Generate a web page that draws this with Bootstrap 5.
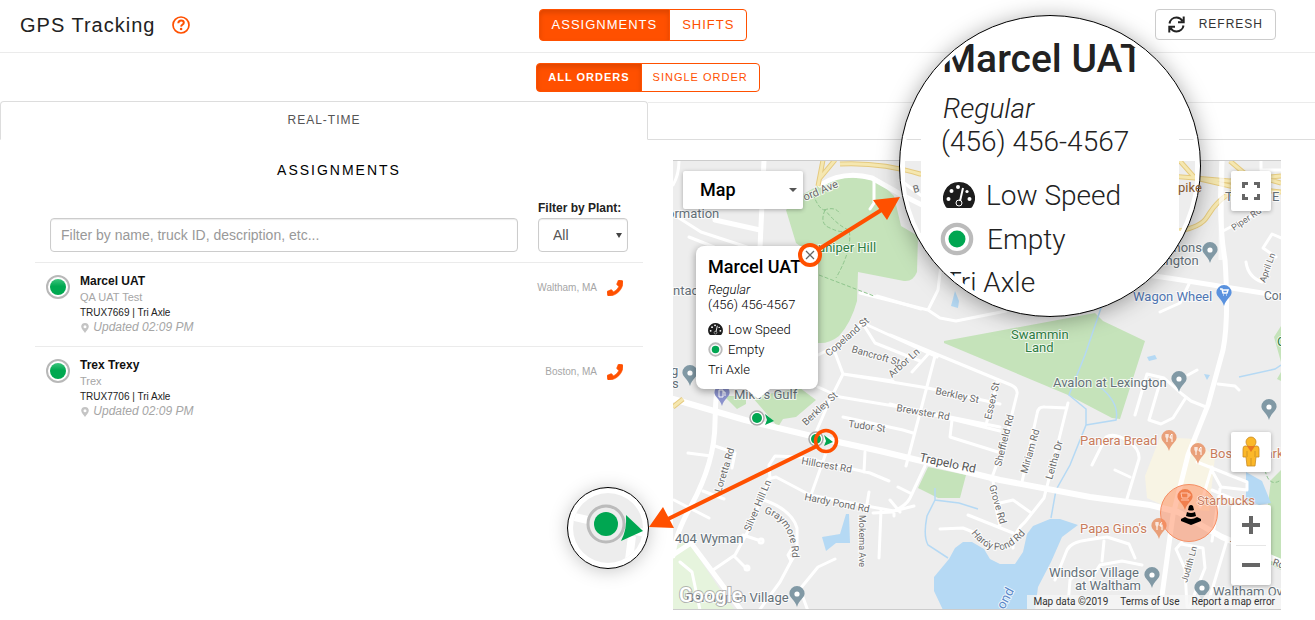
<!DOCTYPE html>
<html lang="en">
<head>
<meta charset="utf-8">
<meta name="viewport" content="width=device-width, initial-scale=1">
<title>GPS Tracking</title>
<link rel="stylesheet" href="https://cdn.jsdelivr.net/npm/bootstrap@5.3.0/dist/css/bootstrap.min.css">
<style>
:root{--brand:#ff5000;--line:#ebebeb;--tabline:#ddd;--muted:#a6a6a6}
body{font-family:"Liberation Sans",Arial,sans-serif;font-size:12px;line-height:15px;color:#222;background:#fff;overflow-x:hidden}
.topbar{display:grid;grid-template-columns:1fr auto 1fr;align-items:center;height:53px;padding:0 39px 3px 10px;border-bottom:1px solid var(--line)}
.topbar h1{font-size:20px;line-height:24px;letter-spacing:1px}
.titlebox{padding-left:10px;gap:17px}
.subbar{height:48px;padding-right:19px}
.btn-brand{--bs-btn-color:var(--brand);--bs-btn-border-color:var(--brand);--bs-btn-border-radius:4px;--bs-btn-active-bg:var(--brand);--bs-btn-active-border-color:var(--brand);--bs-btn-active-color:#fff;--bs-btn-hover-color:#fff;--bs-btn-hover-bg:var(--brand);--bs-btn-hover-border-color:var(--brand);--bs-btn-padding-x:11px;--bs-btn-padding-y:5px;letter-spacing:1px}
.btn-brand.active{box-shadow:inset 0 3px 5px rgba(0,0,0,.13)}
.group-lg .btn{font-size:13px;line-height:20px;padding-left:12px;padding-right:12px}
.group-sm .btn{font-size:11px;line-height:17px}
.btn-refresh{--bs-btn-border-color:#ccc;--bs-btn-border-radius:4px;--bs-btn-padding-x:12px;--bs-btn-padding-y:5px;font-size:12px;line-height:19px;letter-spacing:1px;color:#333;gap:14px}
.split{display:grid;grid-template-columns:1fr 1fr;padding-right:19px}
.tabrow{border-bottom:1px solid var(--tabline)}
.tabrow .nav-link{width:100%;height:39px;margin-bottom:-1px;border:1px solid var(--tabline);border-bottom-color:#fff;border-radius:4px 4px 0 0;background:#fff;color:#555;letter-spacing:1px;padding:0;font-size:12px}
.tabrow .blank-tab{border-top:1px solid var(--line);margin:1px -19px 0 0}
.listpane{padding:22px 5px 0 35px}
.listpane h2{font-size:14px;line-height:17px;letter-spacing:2px;color:#000}
.filters{padding:22px 15px 0;margin-bottom:10px;gap:20px}
.filters .form-control,.filters .form-select{height:34px;border-color:#ccc;border-radius:4px;font-size:14px;line-height:20px;color:#555;padding:6px 10px;box-shadow:inset 0 1px 1px rgba(0,0,0,.08)}
.filters .form-control::placeholder{color:#999}
.filters label{margin-bottom:2px}
.plantbox{flex:0 0 90px}
.filters .form-select{padding:6px 14px;background-image:url("data:image/svg+xml,%3Csvg xmlns='http://www.w3.org/2000/svg' viewBox='0 0 6 5'%3E%3Cpath d='M0 0h6L3 5z' fill='%23444'/%3E%3C/svg%3E");background-size:6px 5px;background-position:right 5px center}
.driver{border-top:1px solid var(--line);height:84px;padding:11px 20px 0 11px;gap:10px}
.driver .dot{width:24px;height:24px;margin-top:1px}
.driver .phone{width:16px;height:16px}
.driver b{color:#111}
.driver .company{margin-top:1px}
.grey{color:var(--muted)}
.sm11{font-size:11px}.sm10{font-size:10px}
.place{margin-top:6px;gap:10px}
.mapcol{padding:20px 15px 10px 25px}
.mapbox{position:relative;border-top:1px solid #ccc;border-bottom:1px solid #ccc}
.mapbox>svg{display:block;width:100%}
.mapart text,.callouts text{font-family:Roboto,sans-serif}
.overlay{position:absolute}
.maptype{left:10px;top:10px;width:120px;height:38px;border:0;background:#fff;box-shadow:0 1px 4px rgba(0,0,0,.3);border-radius:2px;font:500 18px/38px Roboto,sans-serif;color:#000;padding:0 6px 0 17px}
.mapctl{right:10px;width:40px;background:#fff;border-radius:2px;box-shadow:0 1px 4px rgba(0,0,0,.3)}
.mapctl button{border:0;background:none;width:40px;height:40px;padding:0;display:flex;align-items:center;justify-content:center}
.full{top:10px}.pegman{bottom:137px}.zoomer{bottom:24px}
.zoomer button+button:before{content:"";position:absolute;top:40px;width:30px;border-top:1px solid #e6e6e6}
.credits{right:0;bottom:0;height:14px;background:rgba(245,245,245,.75);font:10px/14px Roboto,sans-serif;padding:0 6px;gap:12px;white-space:nowrap}
.credits a,.credits span{color:#333;text-decoration:none}
.infocard{left:23px;top:85px;width:122px;height:143px;background:#fff;border-radius:8px;box-shadow:0 2px 7px 1px rgba(0,0,0,.3);padding:9px 12px;font:300 13px/15px Roboto,sans-serif;color:#000;white-space:nowrap}
.infocard:after{content:"";position:absolute;left:50px;top:100%;border:12px solid transparent;border-top:10px solid #fff;border-bottom:0}
.infocard strong{font-weight:500;font-size:18px;line-height:24px;display:block;margin-bottom:3px}
.infocard .line{display:flex;align-items:center;gap:5px;height:20px}
.infocard .tel{margin-bottom:7px}
.callouts{position:absolute;left:0;top:0;overflow:visible;pointer-events:none}
</style>
</head>
<body>
<svg width="0" height="0" class="position-absolute" aria-hidden="true">
<defs>
<linearGradient id="gr" x2="0" y2="1"><stop offset="0" stop-color="#3cc47c"/><stop offset=".45" stop-color="#00a850"/></linearGradient>
<symbol id="i-dot" viewBox="0 0 24 24"><circle cx="12" cy="12" r="11" fill="#fff" stroke="#b8b8b8" stroke-width="2"/><circle cx="12" cy="12" r="8" fill="url(#gr)"/></symbol>
<symbol id="i-state" viewBox="0 0 24 24"><circle cx="12" cy="12" r="10" fill="#fff" stroke="#bbb" stroke-width="3"/><circle cx="12" cy="12" r="6" fill="#00a651"/></symbol>
<symbol id="i-phone" viewBox="0 0 512 512"><path fill="#ff5000" stroke="#ff5000" stroke-width="24" stroke-linejoin="round" d="M493.400 24.600l-104-24c-11.300-2.600-22.900 3.300-27.500 13.900l-48 112c-4.200 9.800-1.400 21.300 6.900 28l60.600 49.600c-36 76.700-98.900 140.500-177.200 177.200l-49.600-60.600c-6.800-8.300-18.200-11.100-28-6.900l-112 48C3.900 366.500-2 378.100.6 389.400l24 104C27.100 504.200 36.700 512 48 512c256.100 0 464-207.500 464-464 0-11.200-7.700-20.900-18.600-23.400z"/></symbol>
<symbol id="i-pin" viewBox="0 0 8 10"><path fill="#c4c4c4" fill-rule="evenodd" d="M4 0a3.800 3.800 0 0 1 3.800 3.800C7.800 6 5 8 4 10 3 8 .2 6 .2 3.800A3.800 3.800 0 0 1 4 0zm0 2.200a1.500 1.500 0 1 0 0 3 1.500 1.500 0 0 0 0-3z"/></symbol>
<symbol id="i-gauge" viewBox="0 0 32 26"><path fill="#1c1c1c" d="M16 0a16 16 0 0 0-13.500 24.500q.8 1.500 2.500 1.500h22q1.700 0 2.500-1.500A16 16 0 0 0 16 0z"/><g fill="#fff"><circle cx="5.500" cy="17" r="2"/><circle cx="8.500" cy="9" r="2"/><circle cx="15" cy="5" r="2"/><circle cx="26.500" cy="17" r="2"/><circle cx="24" cy="9.500" r="1.600"/></g><path d="M20 6l-3 13" stroke="#fff" stroke-width="2"/><circle cx="16" cy="21" r="3" fill="none" stroke="#fff" stroke-width="1"/></symbol>
<symbol id="m-pin" viewBox="0 0 16 21"><path d="M8 0a7.600 7.600 0 0 1 7.600 7.600C15.600 12 10 14 8 21 6 14 .4 12 .4 7.600A7.600 7.600 0 0 1 8 0z"/></symbol>
<g id="poi"><use href="#m-pin" x="-8" y="-8" width="16" height="21" fill="#8199a5"/><circle r="2.600" fill="#fff"/></g>
<g id="food"><use href="#m-pin" x="-8" y="-8" width="16" height="21" fill="#e9a07a"/><path d="M-3-4v3q0 1 1 1v4M-1-4v3q0 1-1 1M-2-4v3M3 4v-8q-2 1-2 4h2" fill="none" stroke="#fff"/></g>
<g id="truck"><circle r="7" fill="#fff" stroke="#aaa" stroke-width="1.500"/><circle r="5" fill="#00a651"/><path d="M8-4l9 7-9 4 2-5z" fill="#00a651"/></g>
</defs>
</svg>

<header class="topbar">
  <div class="titlebox d-flex align-items-center">
    <h1 class="m-0 fw-normal">GPS Tracking</h1>
    <svg width="18" height="18" viewBox="0 0 18 18" role="img" aria-label="Help"><circle cx="9" cy="9" r="8" fill="none" stroke="#ff5000" stroke-width="1.700"/><path d="M6.300 7.200q.2-2.700 2.800-2.700 2.700 0 2.700 2.200 0 1.200-1.300 1.900T9.100 10.600" fill="none" stroke="#ff5000" stroke-width="2"/><circle cx="9.100" cy="13" r="1.300" fill="#ff5000"/></svg>
  </div>
  <div class="btn-group group-lg" role="group" aria-label="View">
    <button type="button" class="btn btn-brand active">ASSIGNMENTS</button>
    <button type="button" class="btn btn-brand">SHIFTS</button>
  </div>
  <button type="button" class="btn btn-refresh ms-auto d-flex align-items-center">
    <svg width="17" height="17" viewBox="0 0 17 17" fill="none" stroke="#222" stroke-width="2" aria-hidden="true"><path d="M1.500 7.500C2 4 5 1.500 8.500 1.500c2.500 0 4.500 1.200 6 3.500M15.700.5v5.700H10M15.500 9.500C15 13 12 15.500 8.500 15.500c-2.500 0-4.500-1.200-6-3.500M1.300 16.500v-5.700H7"/></svg>
    REFRESH
  </button>
</header>

<div class="subbar d-flex justify-content-center align-items-center">
  <div class="btn-group group-sm" role="group" aria-label="Orders">
    <button type="button" class="btn btn-brand active fw-bold">ALL ORDERS</button>
    <button type="button" class="btn btn-brand">SINGLE ORDER</button>
  </div>
</div>

<nav class="tabrow split">
  <button type="button" class="nav-link active">REAL-TIME</button>
  <div class="blank-tab"></div>
</nav>

<main class="split">
  <section class="listpane">
    <h2 class="m-0 fw-normal text-center">ASSIGNMENTS</h2>
    <div class="filters d-flex align-items-end">
      <input type="text" class="form-control flex-fill" aria-label="Filter drivers" placeholder="Filter by name, truck ID, description, etc...">
      <div class="plantbox">
        <label for="plant" class="fw-bold d-block text-nowrap">Filter by Plant:</label>
        <select id="plant" class="form-select"><option>All</option></select>
      </div>
    </div>
    <article class="driver d-flex">
      <svg class="dot"><use href="#i-dot"/></svg>
      <div class="flex-fill">
        <b class="d-block">Marcel UAT</b>
        <div class="grey sm11 company">QA UAT Test</div>
        <div class="sm10">TRUX7669 | Tri Axle</div>
        <em class="grey d-block"><svg width="10" height="10"><use href="#i-pin"/></svg> Updated 02:09 PM</em>
      </div>
      <div class="place d-flex align-items-start"><span class="grey sm10">Waltham, MA</span><a href="#" aria-label="Call Marcel UAT"><svg class="phone d-block"><use href="#i-phone"/></svg></a></div>
    </article>
    <article class="driver d-flex">
      <svg class="dot"><use href="#i-dot"/></svg>
      <div class="flex-fill">
        <b class="d-block">Trex Trexy</b>
        <div class="grey sm11 company">Trex</div>
        <div class="sm10">TRUX7706 | Tri Axle</div>
        <em class="grey d-block"><svg width="10" height="10"><use href="#i-pin"/></svg> Updated 02:09 PM</em>
      </div>
      <div class="place d-flex align-items-start"><span class="grey sm10">Boston, MA</span><a href="#" aria-label="Call Trex Trexy"><svg class="phone d-block"><use href="#i-phone"/></svg></a></div>
    </article>
  </section>

  <section class="mapcol">
    <div class="mapbox">
      <svg class="mapart" viewBox="673 161 608 448" role="img" aria-label="Map of Waltham">
        <g id="land">
          <path fill="#ededed" d="M673 160h608v450H673z"/>
          <g fill="#c5e3ba">
            <path d="M786 210l14-14 28-16q34-6 54 4l12 12 7 30 17 10-1 36q-4 10-13 9l-46-9-1 29q-6 22-18 35-10 8-21 7l-8-90-14-10z"/>
            <path d="M944 341l151-28 8 8 42 20-25 78-8-1-44-23-124-52z"/>
            <path d="M928 467l38 8-6 23-22 0-20-10zM752 397l48-9 16 12-20 17-13 2-5 8zM724 396l22 0 0 8-9 5zM1281 326l-7 11 7 25zM1281 470l-10 10-10 80 20 10zM1281 372l-4 7 4 2z"/>
          </g>
          <path fill="#e6f4dd" d="M673 548l14-8 40 60 8 10h-62z"/>
          <path fill="#f8f4e4" d="M1160 437l35 2 20 18-6 54-40-3-22-10-2-22z"/>
          <g fill="#b5d9f4">
            <path d="M1050 519l10 0 18 6-16 12-11 25-13 25-3 23h-92l-9-19 0-14 15-18 6-11 8-6h9l12 7 6 10 10 5h15l8-12 4-18 6-8z"/>
            <path d="M846 514h3l1 29-14 0-10 8-4-14 18-3zM1147 357l8-2 2 4-8 2zM1204 374l6 1-3 5zM955 291l4 10-1 7-7-2zM1246 472l16 9 9 22-12 2-13-5z"/>
          </g>
          <path fill="none" stroke="#b5d9f4" stroke-width="1.500" d="M1102 305l-17 50-16 40 17 14v16l-16 40-14 25-5 28M1086 425l30-5q4-17-17-34M935 488v12l24 3 19 6M935 500l-8 16q-4 20 1 29l20 13M1239 377l36-8 6-4"/>
          <g fill="none" stroke="#fff" stroke-linecap="round" stroke-linejoin="round">
            <g stroke-width="3">
              <path d="M679 160q0 15-6 25M679 218l22 14 110 36M689 237l25 10M874 181v22l-4 6M877 296l44 13M818 355l16-8 29-24 74 34M863 324l12 19 45 18M834 350l9 24 50 7M843 374l-13 26-14 32M818 387l22 10 60 10 100 20M843 374l85 14 72 16M843 417l60 13 10 3M912 372l18-20M890 335l121 50q7 3 6 9l-12 48-14 38M935 356l-29 110M998 380l-12 45M952 420l-2 17 48 15M890 404l110 27M1022 482l15-68q1-8 8-7l22 1M1068 403l-17 68-7 27-19 24q-12 10-12 26M993 480l3 28 4 18M968 515l45 18M1000 503l13-3 17 12M940 529l23-1 10 4M925 466l-15 32q-4 8-18 14l-19 1M898 487l14 7M894 511v5"/>
              <path d="M860 293l68 17 12 8 16 3 50-10M928 310l10-20 3-25M900 180l30 22 20 3M1160 312l20-9 9-19M1223 231l40-21M1263 248l9-14 9 4M1263 248l13 9M1246 262q2 15 16 20M1261 160v10h20M1135 415l12-41 17 4 18 16 9 7 15 6M1185 399l-12 19-12 6-12-4 12-41M1188 375l9-5M1218 384l17 2 4 4M1092 465l14-28q8-5 22 4 12 8 11 18l-13 43M1115 470l15 7M1055 580l12-30q4-8 20-10l20-3 22 7 6 14M1104 541l-2 20M1090 580l10-15 22-4 20 4M1068 605l2-25 10-10"/>
              <path d="M1197 462l50 20v8l-26-3-11-20M1212 467l-12 40M1220 489l-8 52M1212 490l35 15M1182 542l-6 7 9 20 2 38M1181 544l22 4 2 20-16 40M1227 540l-18 60M688 453l23 3M715 446l20 7-3 15M703 491l21 8M674 500l35 18M713 570l22-15 12-22 20-47M767 489l1-10 8-2 34 18 62 12 22 4 20-5M770 479l-1-14 6-9 25 1 70 16 19 8M865 452l-1 20M827 450l-16 45M869 492l-3 18M881 510l-2 48M764 500q28 10 33 28v22l-17 32-22 30M743 535l15 5M735 557l11 11M835 559l-17 8-18 22 8 22M680 562l12 10 8 38M890 500l10 12"/>
              <path d="M791 550l4 5-4 6-3-6zM759 541a2 2 0 1 0 4 0 2 2 0 1 0-4 0M745 568a2 2 0 1 0 4 0 2 2 0 1 0-4 0"/>
            </g>
            <g stroke-width="5">
              <path d="M764 160l-4 88-20 44q-24 60-25 130 0 40-24 84-16 28-18 50"/>
              <path d="M760 230l-45-10M820 185q24-15 52-7l30 17 30 15M1222 160q-4 60 3 100 4 60-2 90l-15 55-20 50-15 60-13 95M1100 268l75 11 106 17M673 555l18-12 50 67"/>
              <path stroke-width="6" d="M673 399l72 21 75 18 60 13 50 12 70 17 90 17 60 8 28 7 44 25 59 25"/>
            </g>
          </g>
          <g fill="none" stroke-linecap="butt">
            <g stroke="#e5ca7f" stroke-width="5"><path d="M823 160l-5 26M835 160l-15 18M840 164q40-2 80 10 140 10 250 2l60 5 51-5M1179 160l16 18 35 8 51 6M1230 161l14 12 37 10M1179 231q22-4 28-14 12-20 28-26M673 407l10-8"/></g>
            <g stroke="#f5e7b0" stroke-width="3"><path d="M823 160l-5 26M835 160l-15 18M840 164q40-2 80 10 140 10 250 2l60 5 51-5M1179 160l16 18 35 8 51 6M1230 161l14 12 37 10M1179 231q22-4 28-14 12-20 28-26M673 407l10-8"/></g>
            <path stroke="#8fc58d" stroke-dasharray="4 2" d="M813 194q6 16 12 16 13 16 24 20 4 18-13 48M825 210q-6 14 5 18 12 6 18 2M824 210q12-4 16 4M819 275l55 21M1265 470q4 18 16 10M1263 540l8 25"/>
          </g>
          <path stroke="#fff" stroke-width="5" d="M1222 160l-1 100" opacity=".7"/>
        </g>
        <g font-size="13" fill="#647078" stroke="#fff" stroke-width="2" paint-order="stroke" stroke-opacity=".75">
          <text x="667" y="218">ormation</text><text x="673" y="295">ntact</text><text x="671" y="375">g</text><text x="672" y="388">s</text>
          <text x="734" y="399">Mike's Gulf</text><text x="675" y="543">404 Wyman</text><text x="686" y="602">Barrington Village</text>
          <text x="1053" y="387">Avalon at Lexington</text><text x="1049" y="577">Windsor Village</text><text x="1075" y="590">at Waltham</text><text x="1213" y="596">Waltham Oven</text>
          <text x="1147" y="252">Simmons</text><text x="1142" y="265">Lexington</text><text x="1225" y="201">T</text><text x="1272" y="201">E</text>
          <text x="1133" y="301" fill="#4f76b3">Wagon Wheel</text><text x="1264" y="300" font-size="12">Concord</text>
          <text x="818" y="252" fill="#2e7d43">uniper Hill</text><text x="1011" y="339" fill="#2e7d43">Swammin</text><text x="1025" y="352" fill="#2e7d43">Land</text><text x="1277" y="346" fill="#2e7d43">C</text>
          <g fill="#c97c5c"><text x="1080" y="445">Panera Bread</text><text x="1210" y="458">Boston Market</text><text x="1080" y="533">Papa Gino's</text></g>
          <text transform="translate(1004 610) rotate(-62)" fill="#5b88c9">ond</text>
        </g>
        <g font-size="10" fill="#6a6a6a" stroke="#fff" stroke-width="2" paint-order="stroke" stroke-opacity=".8">
          <text transform="translate(805 201) rotate(-23)" font-size="11">ord Ave</text>
          <text transform="translate(829 357) rotate(-41)">Copeland St</text><text transform="translate(851 352) rotate(16)">Bancroft St</text><text transform="translate(892 378) rotate(-42)">Arbor Ln</text>
          <text transform="translate(806 426) rotate(-43)">Berkley St</text><text transform="translate(848 427) rotate(8)">Tudor St</text><text transform="translate(935 394) rotate(12)">Berkley St</text><text transform="translate(896 411) rotate(10)">Brewster Rd</text>
          <text transform="translate(991 420) rotate(-77)">Essex St</text><text transform="translate(1001 467) rotate(-76)">Sheffield Rd</text><text transform="translate(1027 474) rotate(-74)">Miriam Rd</text><text transform="translate(1052 480) rotate(-74)">Leitha Dr</text>
          <text transform="translate(919 461) rotate(12)" font-size="12" fill="#555">Trapelo Rd</text><text transform="translate(989 486) rotate(74)">Grove Rd</text>
          <text transform="translate(801 464) rotate(10)">Hillcrest Rd</text><text transform="translate(804 500) rotate(11)">Hardy Pond Rd</text><text transform="translate(721 493) rotate(-73)">Loretta Rd</text><text transform="translate(750 532) rotate(-67)">Silver Hill Ln</text>
          <path id="gray" d="M764 513q30 8 28 52" fill="none" stroke="none"/><text><textPath href="#gray">Graymore Rd</textPath></text>
          <path id="hardy" d="M971 533q28 36 58-4" fill="none" stroke="none"/><text><textPath href="#hardy">Hardy Pond Rd</textPath></text>
          <text transform="translate(859 515) rotate(90)" font-size="9">Mokema Ave</text><text transform="translate(1187 583) rotate(-74)" font-size="9">Judith Ln</text><text transform="translate(1265 283) rotate(-70)" font-size="9">April Ln</text><text transform="translate(1234 231) rotate(-34)" font-size="9">Piper Rd</text>
          <text x="1230" y="550" font-size="12">T</text><text transform="translate(1272 565) rotate(18)">Rd</text>
        </g>
        <use href="#poi" x="690" y="373"/><use href="#poi" x="797" y="594"/><use href="#poi" x="1210" y="250"/><use href="#poi" x="1179" y="379"/><use href="#poi" x="1269" y="407"/><use href="#poi" x="1152" y="575"/><use href="#poi" x="1202" y="588"/>
        <g transform="translate(1224 293)"><use href="#m-pin" x="-8" y="-8" width="16" height="21" fill="#5a92de"/><path d="M-4-4h2l1 4h4l1-3h-5" fill="none" stroke="#fff" stroke-width="1.500"/><path d="M-1 2h1M2 2h1" stroke="#fff"/></g>
        <g transform="translate(722 393)"><use href="#m-pin" x="-8" y="-8" width="16" height="21" fill="#8b92cc"/><path d="M-3 4v-7h4v7zM1-1h2v4" fill="none" stroke="#fff"/></g>
        <use href="#food" x="1169" y="438"/><use href="#food" x="1198" y="451"/><use href="#food" x="1159" y="526"/>
        <g transform="translate(1185 497)"><use href="#m-pin" x="-8" y="-8" width="16" height="21" fill="#e48355"/><path d="M-4-4h7v5h-6zM-4 3h8M3-3h2v2H3" fill="none" stroke="#fff"/></g>
        <circle cx="1189" cy="513" r="28.500" fill="#ff7a45" fill-opacity=".45" stroke="#f58e63"/>
        <text x="1197" y="505" font-size="13" fill="#c97c5c" stroke="#fff" stroke-width="1" paint-order="stroke">Starbucks</text>
        <path d="M1189 506q2-2 4 0l1 4q-3 1-6 0zM1187 512q4 2 8 0l1 4q-5 2-10 0zM1185 517q6 4 12 0l4 2-10 6-10-6zM1181 519l10 4 10-4v2l-10 4-10-4z" fill="#000"/>
        <use href="#truck" x="757" y="418"/><use href="#truck" x="816" y="439"/>
        <text x="679" y="602" font-size="20" font-weight="500" fill="#fff" stroke="#999" stroke-opacity=".7" stroke-width="2" paint-order="stroke">Google</text>
      </svg>

      <button type="button" class="overlay maptype d-flex align-items-center justify-content-between">Map<svg width="8" height="4" aria-hidden="true"><path d="M0 0h8L4 4z" fill="#555"/></svg></button>
      <div class="overlay mapctl full"><button type="button" aria-label="Full screen"><svg width="18" height="18" fill="none" stroke="#666" stroke-width="3"><path d="M1.500 6V1.500H6M12 1.500h4.500V6M16.500 12v4.500H12M6 16.500H1.500V12"/></svg></button></div>
      <div class="overlay mapctl pegman"><button type="button" aria-label="Street view"><svg width="18" height="32" viewBox="0 0 18 32"><g fill="#fbb829" stroke="#c98a24" stroke-width=".8"><path d="M3 10h12q2 0 2 3l0 8h-3l-1 9H5L4 21H1l0-8q0-3 2-3z"/><circle cx="9" cy="6" r="5"/></g><path d="M5 10h8l-4 6z" fill="#e87722"/><path d="M9 22v8M5 15v6M13 15v6" stroke="#d29424"/></svg></button></div>
      <div class="overlay mapctl zoomer"><button type="button" aria-label="Zoom in"><svg width="18" height="18"><path d="M0 9h18M9 0v18" stroke="#666" stroke-width="4"/></svg></button><button type="button" aria-label="Zoom out"><svg width="18" height="4"><path fill="#666" d="M0 0h18v4H0z"/></svg></button></div>
      <div class="overlay credits d-flex"><span>Map data ©2019</span><a href="#">Terms of Use</a><a href="#">Report a map error</a></div>

      <div class="overlay infocard">
        <strong>Marcel UAT</strong>
        <em class="d-block">Regular</em>
        <div class="tel">(456) 456-4567</div>
        <div class="line"><svg width="15" height="12"><use href="#i-gauge"/></svg>Low Speed</div>
        <div class="line"><svg width="15" height="15"><use href="#i-state"/></svg>Empty</div>
        <div class="line">Tri Axle</div>
      </div>

      <svg class="callouts" viewBox="673 161 608 448">
        <defs>
          <filter id="glow" x="-40%" y="-40%" width="180%" height="180%"><feDropShadow dx="0" dy="3" stdDeviation="11" flood-opacity=".35"/></filter>
          <filter id="glow2" x="-60%" y="-60%" width="220%" height="220%"><feDropShadow dx="0" dy="2" stdDeviation="9" flood-opacity=".22"/></filter>
          <clipPath id="lens"><circle cx="1050" cy="166" r="146"/></clipPath>
          <clipPath id="sides"><path d="M905 161h16v72h-16zM1179 161h16v70h-16z"/></clipPath>
          <clipPath id="mini"><circle cx="608" cy="528" r="35"/></clipPath>
        </defs>
        <circle cx="1050" cy="166" r="150.500" fill="#fff" stroke="#000" filter="url(#glow)"/>
        <g clip-path="url(#lens)">
          <g clip-path="url(#sides)"><use href="#land"/><text transform="translate(914 193) rotate(-15)" font-size="10" fill="#6a6a6a">B</text></g>
          <path stroke="#ddd" d="M905 139.500h16M1179 139.500h16"/>
          <g font-size="28" font-weight="300" fill="#222">
            <text x="942" y="72" font-size="39" font-weight="500">Marcel UAT</text>
            <text x="943" y="118" font-style="italic">Regular</text>
            <text x="941" y="151">(456) 456-4567</text>
            <text x="986" y="205">Low Speed</text>
            <text x="987" y="249">Empty</text>
            <text x="945" y="292">Tri Axle</text>
          </g>
          <use href="#i-gauge" x="943" y="182" width="32" height="26"/><use href="#i-state" x="940" y="222" width="34" height="34"/>
        </g>
        <text x="1178" y="192" font-size="13" fill="#84572f">pike</text>
        <circle cx="608" cy="528" r="40.500" fill="#fff" stroke="#000" filter="url(#glow2)"/>
        <g clip-path="url(#mini)"><path fill="#ededed" d="M570 490h80v80h-80z"/><path d="M570 516l75 17M632 536l-4 32" stroke="#fff" stroke-width="8"/></g>
        <circle cx="606" cy="524" r="18" fill="#ededed" stroke="#bbb" stroke-width="3"/><circle cx="606" cy="524" r="12" fill="#00a651"/><path d="M626 515l17 16-22 10q6-11 5-26z" fill="#00a651"/>
        <path fill="none" stroke="#ff5000" stroke-width="4" d="M819 249l64-40M817 446l-151 74"/>
        <path fill="#ff5000" d="M900 197l-27 3 14 20zM649 527l14-20 11 21z"/>
        <circle cx="810" cy="255" r="10" fill="#fff" stroke="#ff5000" stroke-width="4"/><path d="M806 251l8 8M814 251l-8 8" stroke="#666" stroke-width="1.300"/>
        <circle cx="826" cy="441" r="10.500" fill="none" stroke="#ff5000" stroke-width="3.500"/>
      </svg>
    </div>
  </section>
</main>
<script src="https://cdn.jsdelivr.net/npm/bootstrap@5.3.0/dist/js/bootstrap.bundle.min.js"></script>
</body>
</html>
